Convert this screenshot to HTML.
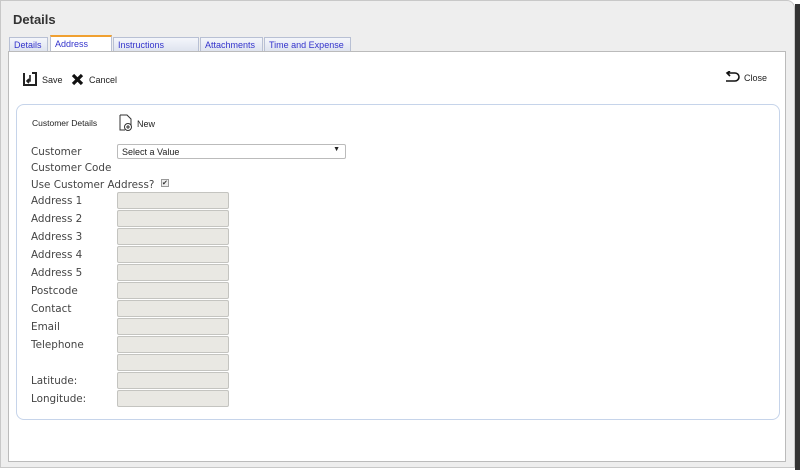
<!DOCTYPE html>
<html><head><style>
*{margin:0;padding:0;box-sizing:border-box}
body{width:800px;height:470px;background:#fff;position:relative;overflow:hidden;font-family:"DejaVu Sans","Liberation Sans",sans-serif}
.win{position:absolute;left:0;top:0;width:795px;height:468px;background:#eeeeee;border:1px solid #c8c8c8;border-top-right-radius:8px}
.rb{position:absolute;left:795px;top:4px;width:5px;height:466px;background:#333}
h1{position:absolute;left:13px;top:12px;font:bold 13px "Liberation Sans",sans-serif;color:#333}
.tab{position:absolute;top:37px;height:15px;background:linear-gradient(#f4f6fb,#dde2ee);border:1px solid #b8c0d4;border-bottom:none;font:9px "Liberation Sans",sans-serif;color:#3333cc;padding:2px 0 0 4px}
.tab.on{background:#fff;border-top:2px solid #f0a030;top:35px;height:17px}
.panel{position:absolute;left:8px;top:51px;width:778px;height:411px;background:#fff;border:1px solid #bbb}
.fs{position:absolute;left:16px;top:104px;width:764px;height:316px;border:1px solid #c6d4ea;border-radius:8px}
.t{position:absolute;font-size:10.4px;color:#444}
.s{position:absolute;font:9px "Liberation Sans",sans-serif;color:#222}
.in{position:absolute;left:117px;width:112px;height:17px;background:#e9e8e3;border:1px solid #c4c4c0;border-radius:2px}
</style></head><body>
<div class="win"></div><div class="rb"></div>
<h1>Details</h1>
<div class="tab" style="left:9px;width:39px">Details</div>
<div class="tab on" style="left:50px;width:62px">Address</div>
<div class="tab" style="left:113px;width:86px">Instructions</div>
<div class="tab" style="left:200px;width:63px">Attachments</div>
<div class="tab" style="left:264px;width:87px">Time and Expense</div>
<div class="panel"></div>
<svg style="position:absolute;left:23px;top:72px" width="14" height="14" viewBox="0 0 14 14"><path d="M1 1v12h12V1h-4" fill="none" stroke="#222" stroke-width="2"/><path d="M7 3v6H4M6 7l-2 2 2 2" fill="none" stroke="#222" stroke-width="1.6"/></svg>
<div class="s" style="left:42px;top:75px">Save</div>
<svg style="position:absolute;left:71px;top:73px" width="13" height="13" viewBox="0 0 13 13"><path d="M2 2l9 9M11 2l-9 9" stroke="#111" stroke-width="3.2"/></svg>
<div class="s" style="left:89px;top:75px">Cancel</div>
<svg style="position:absolute;left:724px;top:71px" width="16" height="12" viewBox="0 0 16 12"><path d="M4 2h7a4 4 0 0 1 0 8H2M6 0L3 2l3 3" fill="none" stroke="#111" stroke-width="1.6"/></svg>
<div class="s" style="left:744px;top:73px">Close</div>
<div class="fs"></div>
<div class="s" style="left:32px;top:118px;font-size:8.5px">Customer Details</div>
<svg style="position:absolute;left:119px;top:114px" width="14" height="18" viewBox="0 0 14 18"><path d="M1 1h7l4 4v7M1 1v15h5" fill="none" stroke="#333"/><circle cx="9" cy="13" r="3.5" fill="#fff" stroke="#333"/><path d="M9 11v4M7 13h4" stroke="#333"/></svg>
<div class="s" style="left:137px;top:119px">New</div>
<div class="t" style="left:31px;top:146px">Customer</div>
<div style="position:absolute;left:117px;top:144px;width:229px;height:15px;border:1px solid #bbb;border-radius:2px;font:9px 'Liberation Sans',sans-serif;color:#222;padding:2px 4px">Select a Value<span style="position:absolute;right:5px;top:1px;font-size:7px">▼</span></div>
<div class="t" style="left:31px;top:162px">Customer Code</div>
<div class="t" style="left:31px;top:179px">Use Customer Address?</div>
<div style="position:absolute;left:161px;top:179px;width:8px;height:8px;border:1px solid #999;background:#eee;font-size:7px;line-height:7px;color:#333">✔</div>
<div class="t" style="left:31px;top:195px">Address 1</div><div class="in" style="top:192px"></div>
<div class="t" style="left:31px;top:213px">Address 2</div><div class="in" style="top:210px"></div>
<div class="t" style="left:31px;top:231px">Address 3</div><div class="in" style="top:228px"></div>
<div class="t" style="left:31px;top:249px">Address 4</div><div class="in" style="top:246px"></div>
<div class="t" style="left:31px;top:267px">Address 5</div><div class="in" style="top:264px"></div>
<div class="t" style="left:31px;top:285px">Postcode</div><div class="in" style="top:282px"></div>
<div class="t" style="left:31px;top:303px">Contact</div><div class="in" style="top:300px"></div>
<div class="t" style="left:31px;top:321px">Email</div><div class="in" style="top:318px"></div>
<div class="t" style="left:31px;top:339px">Telephone</div><div class="in" style="top:336px"></div>
<div class="in" style="top:354px"></div>
<div class="t" style="left:31px;top:375px">Latitude:</div><div class="in" style="top:372px"></div>
<div class="t" style="left:31px;top:393px">Longitude:</div><div class="in" style="top:390px"></div>
</body></html>
